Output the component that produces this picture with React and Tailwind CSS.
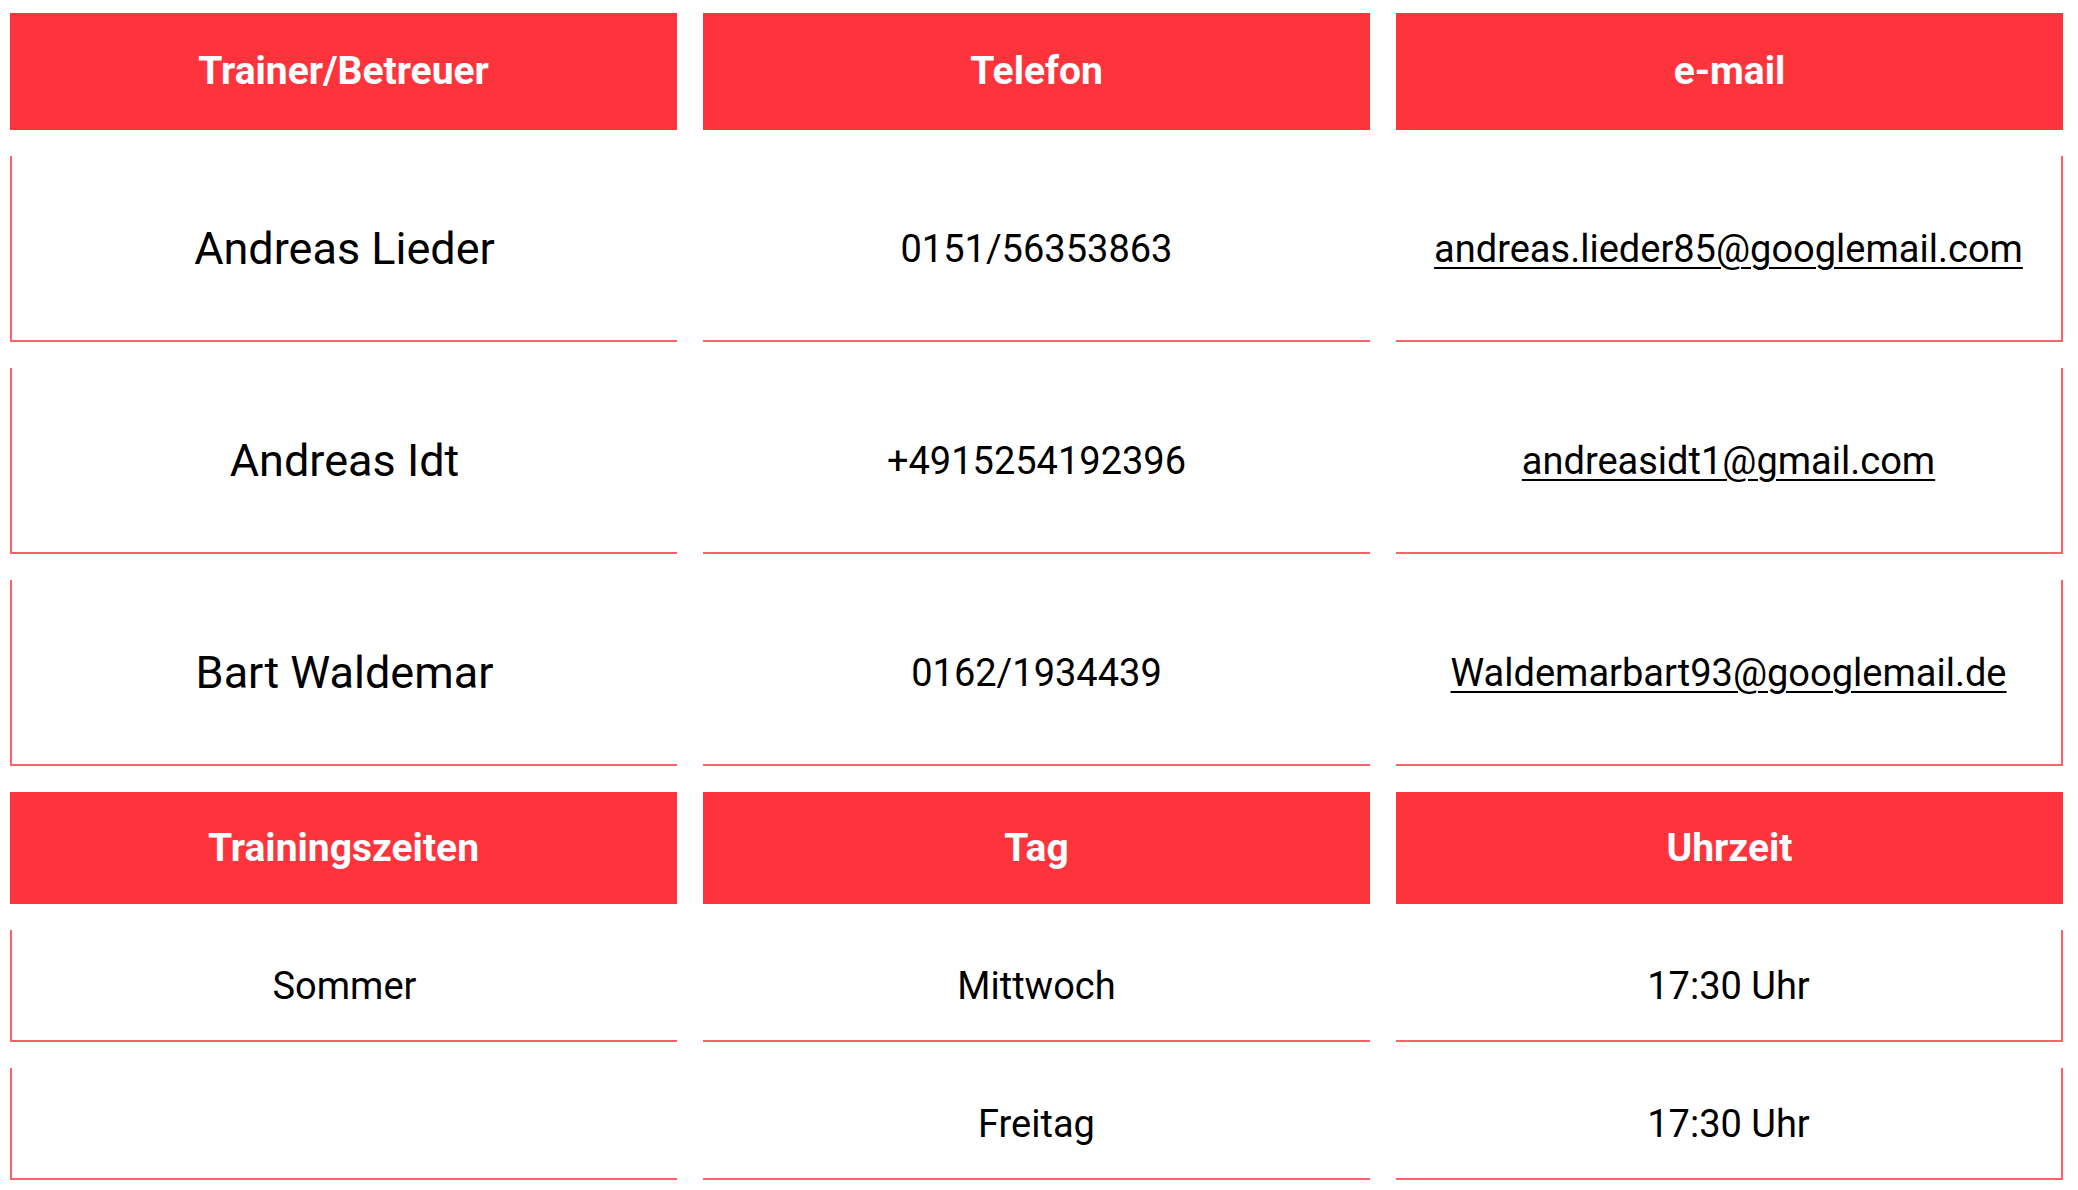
import React from 'react';

const trainers = [
  { name: 'Andreas Lieder', phone: '0151/56353863', email: 'andreas.lieder85@googlemail.com' },
  { name: 'Andreas Idt', phone: '+4915254192396', email: 'andreasidt1@gmail.com' },
  { name: 'Bart Waldemar', phone: '0162/1934439', email: 'Waldemarbart93@googlemail.de' },
];

const times = [
  { season: 'Sommer', day: 'Mittwoch', time: '17:30 Uhr' },
  { season: '', day: 'Freitag', time: '17:30 Uhr' },
];

function HeaderRow({ labels, tall }) {
  return (
    <div className="grid grid-cols-3 gap-x-[26px]">
      {labels.map((label) => (
        <div
          key={label}
          className={`flex items-center justify-center bg-[#fe343c] text-white font-bold text-[39px] ${tall ? 'h-[117px]' : 'h-[112px]'}`}
        >
          {label}
        </div>
      ))}
    </div>
  );
}

function Cell({ pos, height, children }) {
  const sides =
    pos === 0
      ? 'border-l-2 border-b-2'
      : pos === 2
      ? 'border-r-2 border-b-2'
      : 'border-b-2';
  return (
    <div className={`flex items-center justify-center pt-[2px] border-[#ff6168] ${sides} ${height}`}>
      {children}
    </div>
  );
}

export default function App() {
  return (
    <div
      className="min-h-screen bg-white pt-[13px] pl-[10px] pr-[15px] text-black"
      style={{ fontFamily: 'Roboto, "Noto Sans", sans-serif' }}
    >
      <div className="flex flex-col gap-y-[26px]">
        <HeaderRow labels={['Trainer/Betreuer', 'Telefon', 'e-mail']} tall />

        {trainers.map((t) => (
          <div key={t.name} className="grid grid-cols-3 gap-x-[26px]">
            <Cell pos={0} height="h-[186px]">
              <span className="text-[45px]">{t.name}</span>
            </Cell>
            <Cell pos={1} height="h-[186px]">
              <span className="text-[38px]">{t.phone}</span>
            </Cell>
            <Cell pos={2} height="h-[186px]">
              <a
                href={`mailto:${t.email}`}
                className="text-[38px] underline decoration-2 underline-offset-[5px]"
              >
                {t.email}
              </a>
            </Cell>
          </div>
        ))}

        <HeaderRow labels={['Trainingszeiten', 'Tag', 'Uhrzeit']} />

        {times.map((row) => (
          <div key={row.day} className="grid grid-cols-3 gap-x-[26px]">
            <Cell pos={0} height="h-[112px]">
              <span className="text-[38px]">{row.season}</span>
            </Cell>
            <Cell pos={1} height="h-[112px]">
              <span className="text-[38px]">{row.day}</span>
            </Cell>
            <Cell pos={2} height="h-[112px]">
              <span className="text-[38px]">{row.time}</span>
            </Cell>
          </div>
        ))}
      </div>
    </div>
  );
}
